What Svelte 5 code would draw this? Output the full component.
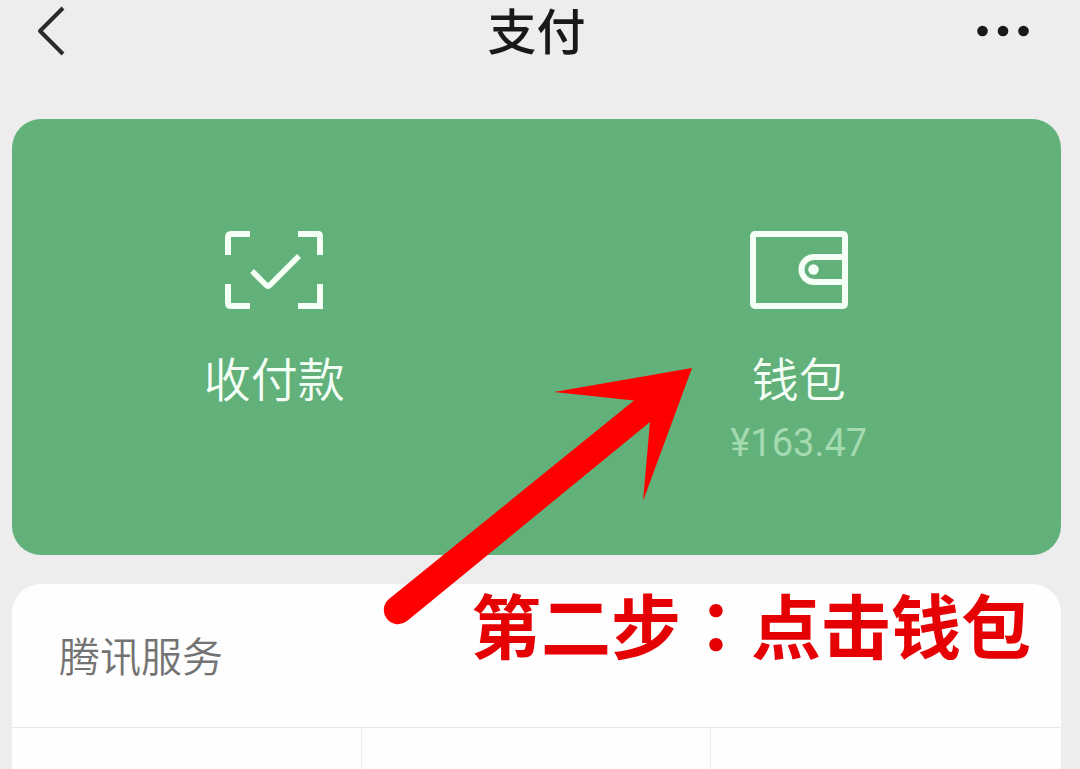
<script>
  export let title = '支付'
  export let balance = '163.47'
  export let step = '第二步'
  export let action = '点击钱包'

  const services = ['', '', '']
</script>

<style>
  :global(body) {
    background: #ededed;
  }
  .page {
    position: relative;
    display: flex;
    flex-direction: column;
    box-sizing: border-box;
    min-height: 100vh;
    padding: 0 19px 0 12px;
    font-family: 'Noto Sans CJK SC', 'Noto Sans', sans-serif;
  }
  button {
    margin: 0;
    padding: 0;
    border: none;
    background: none;
    font-family: inherit;
    color: inherit;
    cursor: pointer;
  }
  svg {
    display: block;
  }
  header {
    display: flex;
    align-items: center;
    justify-content: space-between;
    height: 62px;
    padding: 0 24px;
    margin-bottom: 57px;
    color: #191919;
  }
  h1 {
    margin: 0;
    padding-top: 4px;
    font-family: 'Liberation Sans', 'Noto Sans CJK SC', sans-serif;
    font-size: 49px;
    line-height: 58px;
    font-weight: 500;
  }
  .nav {
    display: flex;
    width: 60px;
  }
  .nav.more {
    justify-content: flex-end;
  }
  .pay {
    display: grid;
    grid-template-columns: 1fr 1fr;
    margin-bottom: 29px;
    border-radius: 29px;
    background: #62b07a;
    color: #f4fff6;
  }
  .entry {
    display: flex;
    flex-direction: column;
    align-items: center;
    height: 436px;
    padding-top: 111px;
  }
  .label {
    margin-top: 38px;
    font-size: 47px;
    line-height: 60px;
    font-weight: 350;
  }
  .amount {
    font-family: Roboto, 'Noto Sans CJK SC', sans-serif;
    font-size: 38px;
    line-height: 72px;
    color: #a3dab0;
  }
  .services {
    display: flex;
    flex-direction: column;
    flex: 1;
    border-radius: 29px 29px 0 0;
    background: #fefefe;
  }
  h2 {
    margin: 0;
    padding: 0 47px 2px;
    font-size: 41px;
    line-height: 141px;
    font-weight: 350;
    color: #737373;
  }
  .tiles {
    display: grid;
    grid-template-columns: repeat(3, 1fr);
    flex: 1;
    border-top: 1px solid #e6e6e6;
  }
  .tile:not(:last-child) {
    border-right: 1px solid #efefef;
  }
  .arrow {
    position: absolute;
    top: 366px;
    left: 382px;
    pointer-events: none;
  }
  .hint {
    position: absolute;
    top: 582px;
    right: 49px;
    margin: 0;
    font-size: 70px;
    line-height: 84px;
    font-weight: 700;
    white-space: nowrap;
    color: #e50003;
    pointer-events: none;
  }
  /* the TC face centres its full-width colon */
  .colon {
    font-family: 'Noto Sans CJK TC', sans-serif;
  }
</style>

<div class="page">
  <header>
    <button class="nav" aria-label="返回">
      <svg width="32" height="52" viewBox="0 0 32 52" fill="none" stroke="#2b2b2b" stroke-width="4">
        <path d="M27 3 4 26l23 23" stroke-linejoin="round" />
      </svg>
    </button>
    <h1>{title}</h1>
    <button class="nav more" aria-label="更多">
      <svg width="60" height="12" viewBox="0 0 60 12" fill="currentColor">
        <circle cx="5.5" cy="6" r="5.3" />
        <circle cx="26" cy="6" r="5.3" />
        <circle cx="46.5" cy="6" r="5.3" />
      </svg>
    </button>
  </header>

  <main class="pay">
    <button class="entry">
      <svg width="98" height="79" viewBox="0 0 98 79" fill="none" stroke="currentColor" stroke-width="6">
        <path d="M25 4H6Q3 4 3 7v18M73 4h20q2 0 2 2v19M3 54v19q0 3 3 3h19M73 76h22V54" />
        <path d="M27 41l14 14q2 2 4 0l29-29" stroke-width="5.5" />
      </svg>
      <span class="label">收付款</span>
    </button>
    <button class="entry">
      <svg width="98" height="79" viewBox="0 0 98 79" fill="none" stroke="currentColor" stroke-width="6">
        <rect x="3" y="4" width="92" height="72" rx="2" />
        <path d="M95 27H64a12.500 12.500 0 0 0 0 25H95" />
        <circle cx="63.5" cy="39.5" r="5.2" fill="currentColor" stroke="none" />
      </svg>
      <span class="label">钱包</span>
      <span class="amount">¥{balance}</span>
    </button>
  </main>

  <section class="services">
    <h2>腾讯服务</h2>
    <div class="tiles">
      {#each services as name}
        <div class="tile">{name}</div>
      {/each}
    </div>
  </section>

  <svg class="arrow" width="314" height="262" viewBox="0 0 314 262" fill="#ff0000">
    <path d="M310 2 172 26l80 8.500L7 233a14 14 0 0 0 18 22L268 56l-7 79z" />
  </svg>
  <p class="hint">{step}<span class="colon">：</span>{action}</p>
</div>
